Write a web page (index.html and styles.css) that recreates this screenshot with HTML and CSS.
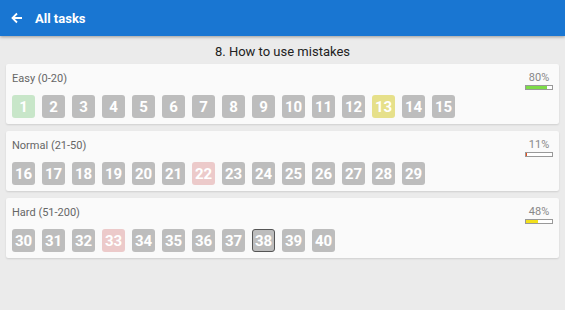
FILE: index.html
```html
<!DOCTYPE html>
<html lang="en">
<head>
    <meta charset="UTF-8">
    <title>All tasks</title>
    <link rel="stylesheet" href="styles.css">
</head>
<body>
    <header class="appbar">
        <svg class="back" width="12" height="12" viewBox="0 0 12 12">
            <path d="M11 6H2M6 1.5L1.5 6L6 10.5" fill="none" stroke="#fff" stroke-width="1.8"/>
        </svg>
        <span class="appbar-title">All tasks</span>
    </header>

    <h1 class="topic">8. How to use mistakes</h1>

    <section class="card">
        <div class="card-head">
            <span class="level">Easy (0-20)</span>
            <div class="progress">
                <span class="pct">80%</span>
                <div class="bar"><div class="fill fill-green" style="width: 80%"></div></div>
            </div>
        </div>
        <div class="tiles">
            <span class="tile done">1</span>
            <span class="tile">2</span>
            <span class="tile">3</span>
            <span class="tile">4</span>
            <span class="tile">5</span>
            <span class="tile">6</span>
            <span class="tile">7</span>
            <span class="tile">8</span>
            <span class="tile">9</span>
            <span class="tile">10</span>
            <span class="tile">11</span>
            <span class="tile">12</span>
            <span class="tile partial">13</span>
            <span class="tile">14</span>
            <span class="tile">15</span>
        </div>
    </section>

    <section class="card">
        <div class="card-head">
            <span class="level">Normal (21-50)</span>
            <div class="progress">
                <span class="pct">11%</span>
                <div class="bar"><div class="fill fill-red" style="width: 5%"></div></div>
            </div>
        </div>
        <div class="tiles">
            <span class="tile">16</span>
            <span class="tile">17</span>
            <span class="tile">18</span>
            <span class="tile">19</span>
            <span class="tile">20</span>
            <span class="tile">21</span>
            <span class="tile failed">22</span>
            <span class="tile">23</span>
            <span class="tile">24</span>
            <span class="tile">25</span>
            <span class="tile">26</span>
            <span class="tile">27</span>
            <span class="tile">28</span>
            <span class="tile">29</span>
        </div>
    </section>

    <section class="card">
        <div class="card-head">
            <span class="level">Hard (51-200)</span>
            <div class="progress">
                <span class="pct">48%</span>
                <div class="bar"><div class="fill fill-yellow" style="width: 48%"></div></div>
            </div>
        </div>
        <div class="tiles">
            <span class="tile">30</span>
            <span class="tile">31</span>
            <span class="tile">32</span>
            <span class="tile failed">33</span>
            <span class="tile">34</span>
            <span class="tile">35</span>
            <span class="tile">36</span>
            <span class="tile">37</span>
            <span class="tile current">38</span>
            <span class="tile">39</span>
            <span class="tile">40</span>
        </div>
    </section>
</body>
</html>
```

FILE: styles.css
```css
body {
    font-family: Roboto, 'Liberation Sans', sans-serif;
    background-color: #ebebeb;
    margin: 0;
    color: #333;
}
.appbar {
    height: 36px;
    background-color: #1976d2;
    box-shadow: 0 1px 3px rgba(0, 0, 0, 0.35);
    display: flex;
    align-items: center;
    padding-left: 11px;
    color: #fff;
}
.back {
    margin-right: 12px;
}
.appbar-title {
    font-size: 13px;
    font-weight: bold;
}
.topic {
    margin: 0;
    padding: 8px 0 4px;
    font-size: 13px;
    line-height: 16px;
    font-weight: normal;
    text-align: center;
    color: #222;
}
.card {
    background-color: #fafafa;
    margin: 0 6px 7px;
    padding: 6px;
    border-radius: 2px;
    box-shadow: 0 1px 2px rgba(0, 0, 0, 0.12);
}
.card-head {
    height: 23px;
    padding-top: 2px;
    display: flex;
    justify-content: space-between;
    align-items: flex-start;
}
.level {
    font-size: 11px;
    line-height: 14px;
    color: #666;
}
.progress {
    display: flex;
    flex-direction: column;
    align-items: center;
}
.pct {
    font-size: 11px;
    line-height: 12px;
    color: #888;
}
.bar {
    width: 26px;
    height: 3px;
    margin-top: 1px;
    border: 1px solid #999;
    background-color: #fff;
}
.fill {
    height: 100%;
}
.fill-green {
    background-color: #7ddc48;
}
.fill-red {
    background-color: #e8501e;
}
.fill-yellow {
    background-color: #f2e01c;
}
.tiles {
    display: flex;
    gap: 7px;
}
.tile {
    width: 23px;
    height: 23px;
    box-sizing: border-box;
    border-radius: 3px;
    background-color: #bdbdbd;
    color: #fff;
    font-size: 15px;
    font-weight: bold;
    display: flex;
    align-items: center;
    justify-content: center;
}
.tile.done {
    background-color: #c8e6c9;
}
.tile.partial {
    background-color: #e6e08a;
}
.tile.failed {
    background-color: #eccaca;
}
.tile.current {
    border: 1px solid #555;
}
```
